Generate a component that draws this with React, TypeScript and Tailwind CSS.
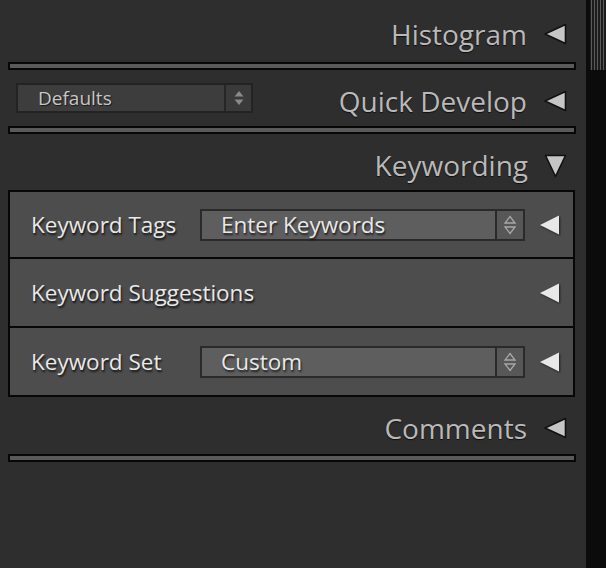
import React from "react";

const font = { fontFamily: '"Open Sans", "Noto Sans", sans-serif' };

function HeaderTri() {
  return (
    <svg width="24" height="22" viewBox="0 0 24 22" className="shrink-0">
      <polygon points="22.5,1.5 22.5,20.5 2,11" fill="#c6c6c6" stroke="#111" strokeWidth="1.6" strokeLinejoin="round" />
    </svg>
  );
}

function DownTri() {
  return (
    <svg width="23" height="24" viewBox="0 0 23 24" className="shrink-0">
      <polygon points="1.5,1.5 21.5,1.5 11.5,22.5" fill="#c6c6c6" stroke="#111" strokeWidth="1.6" strokeLinejoin="round" />
    </svg>
  );
}

function RowTri() {
  return (
    <svg width="22" height="22" viewBox="0 0 22 22" className="shrink-0 drop-shadow-[1px_1px_1px_rgba(0,0,0,0.6)]">
      <polygon points="20,1.5 20,20.5 1,11" fill="#e8e8e8" />
    </svg>
  );
}

function Header({ title, down }: { title: string; down?: boolean }) {
  return (
    <div className="flex items-start justify-end pr-[9px]">
      <span
        className="text-[28px] leading-[28px] text-[#b9b9b9] [text-shadow:0_1px_1px_rgba(0,0,0,0.7)]"
        style={font}
      >
        {title}
      </span>
      <div className={down ? "ml-[16px] mt-[3px]" : "ml-[16px] mt-[3px]"}>{down ? <DownTri /> : <HeaderTri />}</div>
    </div>
  );
}

function Bar() {
  return <div className="h-[8px] border-2 border-[#070707] bg-[#5a5a5a]" />;
}

function KeyStepper() {
  return (
    <div className="flex w-[28px] flex-col items-center justify-center gap-[2px] border-l-2 border-[#2a2a2a] bg-[#575757]">
      <svg width="14" height="22" viewBox="0 0 14 22">
        <polygon points="7,2.5 12,9 2,9" fill="none" stroke="#a8a8a8" strokeWidth="1.3" />
        <polygon points="7,19.5 12,13 2,13" fill="none" stroke="#a8a8a8" strokeWidth="1.3" />
      </svg>
    </div>
  );
}

function KeyDropdown({ value }: { value: string }) {
  return (
    <div className="flex h-[32px] w-[325px] shrink-0 border-2 border-[#2a2a2a] bg-[#5e5e5e]">
      <div
        className="flex flex-1 items-center pl-[19px] text-[22.5px] leading-[22px] text-[#e8e8e8] [text-shadow:1px_2px_2px_rgba(0,0,0,0.7)]"
        style={font}
      >
        {value}
      </div>
      <KeyStepper />
    </div>
  );
}

function Label({ children, w }: { children: React.ReactNode; w?: string }) {
  return (
    <div
      className={`${w ?? "flex-1"} shrink-0 text-[22.5px] leading-[22px] text-[#e8e8e8] [text-shadow:1px_2px_2px_rgba(0,0,0,0.75)]`}
      style={font}
    >
      {children}
    </div>
  );
}

export default function App() {
  return (
    <div className="flex h-[568px] w-[606px] overflow-hidden bg-[#2e2e2e]">
      <div className="flex w-[586px] flex-col pl-[8px] pr-[10px]">
        {/* Histogram */}
        <div className="h-[62px] pt-[20px]">
          <Header title="Histogram" />
        </div>
        <Bar />
        {/* Quick Develop */}
        <div className="flex h-[56px] items-start justify-between">
          <div className="ml-[8px] mt-[13px] flex h-[30px] w-[237px] border-2 border-[#232323] bg-[#3d3d3d]">
            <div
              className="flex flex-1 items-center pl-[20px] text-[19px] leading-[19px] text-[#c6c6c6] [text-shadow:1px_1px_1px_rgba(0,0,0,0.6)]"
              style={font}
            >
              Defaults
            </div>
            <div className="flex w-[27px] items-center justify-center border-l-2 border-[#262626] bg-[#3a3a3a]">
              <svg width="12" height="18" viewBox="0 0 12 18">
                <polygon points="6,2 10.5,7.5 1.5,7.5" fill="#8a8a8a" />
                <polygon points="6,16 10.5,10.5 1.5,10.5" fill="#8a8a8a" />
              </svg>
            </div>
          </div>
          <div className="mt-[17px]">
            <Header title="Quick Develop" />
          </div>
        </div>
        <Bar />
        {/* Keywording */}
        <div className="h-[56px] pt-[17px]">
          <Header title="Keywording" down />
        </div>
        <div className="mr-[1px] flex flex-col border-2 border-[#070707] bg-[#4d4d4d]">
          <div className="flex h-[65px] items-center pl-[21px] pr-[12px]">
            <Label w="w-[169px]">Keyword Tags</Label>
            <KeyDropdown value="Enter Keywords" />
            <div className="ml-[14px]">
              <RowTri />
            </div>
          </div>
          <div className="h-[2px] bg-[#070707]" />
          <div className="flex h-[67px] items-center pl-[21px] pr-[12px]">
            <Label>Keyword Suggestions</Label>
            <RowTri />
          </div>
          <div className="h-[2px] bg-[#070707]" />
          <div className="flex h-[67px] items-center pl-[21px] pr-[12px]">
            <Label w="w-[169px]">Keyword Set</Label>
            <KeyDropdown value="Custom" />
            <div className="ml-[14px]">
              <RowTri />
            </div>
          </div>
        </div>
        {/* Comments */}
        <div className="h-[57px] pt-[17px]">
          <Header title="Comments" />
        </div>
        <Bar />
      </div>
      <div className="flex w-[20px] justify-end bg-[#0b0b0b]">
        <div className="h-[70px] w-[16px] bg-[repeating-linear-gradient(90deg,#1c1c1c_0px,#1c1c1c_1px,#5a5a5a_1px,#5a5a5a_2px,#1c1c1c_2px,#1c1c1c_3px)]" />
      </div>
    </div>
  );
}
